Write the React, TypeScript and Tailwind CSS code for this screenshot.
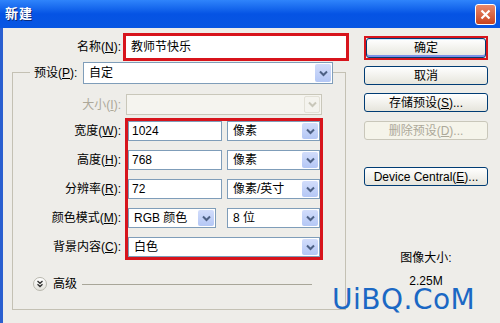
import React from "react";

const font = "font-['Liberation_Sans','Noto_Sans_CJK_SC',sans-serif]";

const Chevron = ({ disabled = false }: { disabled?: boolean }) => (
  <svg width="9" height="7" viewBox="0 0 9 7">
    <path d="M1 1.5 L4.5 5 L8 1.5" fill="none" stroke={disabled ? "#c9c7ba" : "#4d6185"} strokeWidth="2" />
  </svg>
);

const Select = ({ value, w, disabled = false }: { value: string; w: string; disabled?: boolean }) => (
  <div
    className={`${w} h-full flex items-center border ${
      disabled ? "border-[#c9c7ba] bg-[#f5f4ef]" : "border-[#7f9db9] bg-white"
    }`}
  >
    <span className="flex-1 pl-[5px] leading-none whitespace-nowrap">{value}</span>
    <div
      className={`w-[16px] h-[calc(100%-2px)] mr-[1px] rounded-[2px] flex items-center justify-center ${
        disabled ? "bg-[#f4f3ee] border border-[#e2e0d6]" : "bg-linear-to-b from-[#d2ddfb] to-[#b4c7f5]"
      }`}
    >
      <Chevron disabled={disabled} />
    </div>
  </div>
);

const Input = ({ value, w }: { value: string; w: string }) => (
  <div className={`${w} h-full flex items-center border border-[#7f9db9] bg-white pl-[3px] leading-none`}>
    {value}
  </div>
);

const Label = ({ text, k, rest }: { text: string; k: string; rest?: string }) => (
  <span className="whitespace-nowrap">
    {text}(<span className="underline">{k}</span>){rest ?? ":"}
  </span>
);

const Button = ({
  children,
  disabled = false,
  className = "",
}: {
  children: React.ReactNode;
  disabled?: boolean;
  className?: string;
}) => (
  <div
    className={`w-[124px] h-[19px] rounded-[3px] border flex items-center justify-center leading-none whitespace-nowrap ${
      disabled
        ? "border-[#c9c7ba] bg-[#f5f4ea] text-[#aca899]"
        : "border-[#003c74] bg-linear-to-b from-[#ffffff] to-[#e6e5dc] text-black"
    } ${className}`}
  >
    {children}
  </div>
);

export default function App() {
  return (
    <div className={`relative w-[500px] h-[323px] overflow-hidden bg-[#eeede9] text-[12px] text-black ${font}`}>
      {/* title bar */}
      <div className="h-[28px] flex items-center justify-between pl-[5px] pr-[4px] bg-linear-to-b from-[#2f84fb] via-[#0553e4] to-[#0756e2]">
        <span className="text-white font-bold text-[13px] tracking-[1px] [text-shadow:1px_1px_0_#0a2a7a]">新建</span>
        <div className="w-[21px] h-[21px] rounded-[3px] border border-white bg-linear-to-b from-[#e8896a] to-[#c8421c] flex items-center justify-center">
          <svg width="11" height="11" viewBox="0 0 11 11">
            <path d="M1.5 1.5 L9.5 9.5 M9.5 1.5 L1.5 9.5" stroke="white" strokeWidth="2.2" />
          </svg>
        </div>
      </div>

      {/* body */}
      <div className="flex h-[295px] border-l-[3px] border-[#2a5fd0]">
        {/* left column */}
        <div className="w-[347px]">
          <div className="flex items-center mt-[5px] h-[28px]">
            <div className="w-[118px] text-right">
              <Label text="名称" k="N" />
            </div>
            <div className="ml-[2px] w-[226px] h-[28px] border-[3px] border-[#d7141c] bg-white flex items-center pl-[5px]">
              教师节快乐
            </div>
          </div>

          {/* group box */}
          <div className="ml-[9px] mt-[11px] w-[334px] h-[238px] border border-[#c4c1b4]">
            <div className="-mt-[11px] ml-[17px] h-[22px] w-[303px] flex items-center bg-[#eeede9] pl-[4px]">
              <div className="w-[49px]">
                <Label text="预设" k="P" />
              </div>
              <Select value="自定" w="w-[250px]" />
            </div>

            <div className="flex items-center mt-[10px] h-[21px]">
              <div className="w-[108px] text-right text-[#aca899]">
                <Label text="大小" k="I" />
              </div>
              <div className="ml-[5px] h-full">
                <Select value="" w="w-[196px]" disabled />
              </div>
            </div>

            <div className="flex mt-[3px]">
              <div className="w-[108px] pt-[3px] flex flex-col gap-[9px] text-right">
                <div className="h-[20px] leading-[20px]"><Label text="宽度" k="W" /></div>
                <div className="h-[20px] leading-[20px]"><Label text="高度" k="H" /></div>
                <div className="h-[20px] leading-[20px]"><Label text="分辨率" k="R" /></div>
                <div className="h-[20px] leading-[20px]"><Label text="颜色模式" k="M" /></div>
                <div className="h-[20px] leading-[20px]"><Label text="背景内容" k="C" /></div>
              </div>
              <div className="ml-[4px] w-[198px] h-[142px] border-[3px] border-[#d7141c] flex flex-col gap-[9px]">
                <div className="h-[20px] flex gap-[5px]">
                  <Input value="1024" w="w-[94px]" />
                  <Select value="像素" w="w-[93px]" />
                </div>
                <div className="h-[20px] flex gap-[5px]">
                  <Input value="768" w="w-[94px]" />
                  <Select value="像素" w="w-[93px]" />
                </div>
                <div className="h-[20px] flex gap-[5px]">
                  <Input value="72" w="w-[94px]" />
                  <Select value="像素/英寸" w="w-[93px]" />
                </div>
                <div className="h-[20px] flex gap-[11px]">
                  <Select value="RGB 颜色" w="w-[88px]" />
                  <Select value="8 位" w="w-[93px]" />
                </div>
                <div className="h-[20px] flex">
                  <Select value="白色" w="w-[192px]" />
                </div>
              </div>
            </div>

            <div className="flex items-center mt-[17px] h-[14px]">
              <div className="ml-[20px] w-[14px] h-[14px] rounded-full border border-[#b9b8ae] bg-linear-to-b from-white to-[#e4e3dc] flex items-center justify-center">
                <svg width="8" height="8" viewBox="0 0 8 8">
                  <path d="M1.5 1 L4 3.3 L6.5 1 M1.5 4.3 L4 6.6 L6.5 4.3" fill="none" stroke="#333" strokeWidth="1.3" />
                </svg>
              </div>
              <span className="ml-[6px] leading-none">高级</span>
              <div className="flex-1 ml-[5px] mr-[33px] h-px bg-[#a8a699]" />
            </div>
          </div>
        </div>

        {/* right column */}
        <div className="ml-[14px] flex flex-col">
          <div className="mt-[8px] w-[124px] h-[24px] border-2 border-[#d7141c] flex">
            <div className="flex-1 rounded-[3px] border border-[#003c74] bg-linear-to-b from-white to-[#e6e5dc] flex items-center justify-center leading-none shadow-[inset_0_-2px_0_#7d92e8,inset_0_1px_0_#cee7ff]">
              确定
            </div>
          </div>
          <Button className="mt-[6px]">取消</Button>
          <Button className="mt-[8px]">
            <Label text="存储预设" k="S" rest="..." />
          </Button>
          <Button className="mt-[9px]" disabled>
            <Label text="删除预设" k="D" rest="..." />
          </Button>
          <Button className="mt-[27px]">
            <Label text="Device Central" k="E" rest="..." />
          </Button>
          <div className="mt-[65px] w-[124px] h-[14px] leading-[14px] text-center">图像大小:</div>
          <div className="mt-[9px] w-[124px] h-[14px] leading-[14px] text-center">2.25M</div>
        </div>
      </div>

      {/* watermark */}
      <div className="absolute left-[332px] top-[286px] text-[28px] leading-none tracking-[0.5px] text-[#1b68c4] font-['DejaVu_Sans',sans-serif]">
        UiBQ.CoM
      </div>
    </div>
  );
}
